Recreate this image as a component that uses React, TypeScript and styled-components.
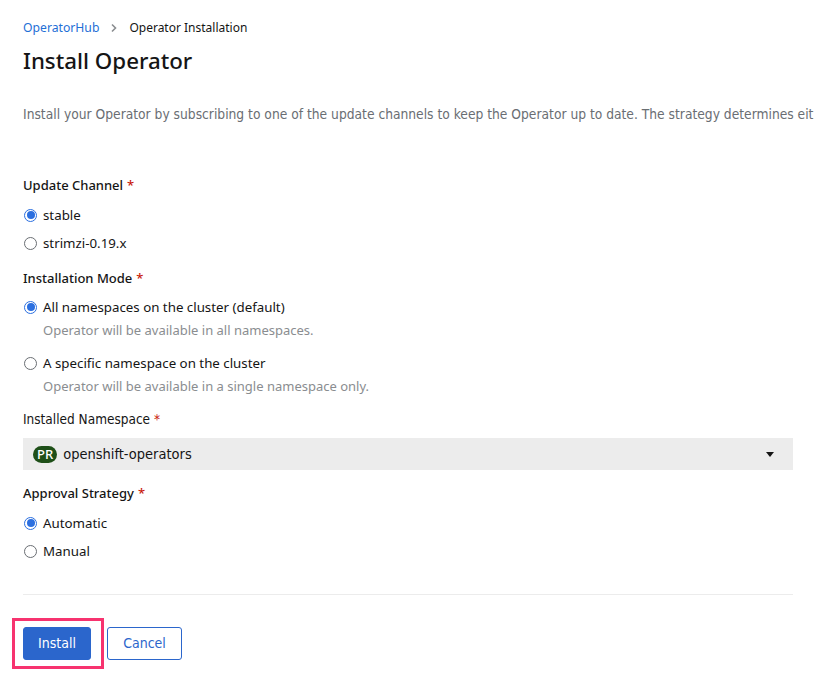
import React from "react";
import styled, { createGlobalStyle } from "styled-components";

const GlobalStyle = createGlobalStyle`
  html, body { margin: 0; padding: 0; background: #fff; }
  body { font-family: "Noto Sans", "Open Sans", sans-serif; color: #151515; overflow: hidden; }
`;

const wide = `"Noto Sans", "Open Sans", sans-serif`;
const narrow = `"Liberation Sans Narrow", "DejaVu Sans Condensed", "Noto Sans", sans-serif`;

const Page = styled.div`
  width: 814px;
  height: 684px;
  padding: 18px 0 0 23px;
  box-sizing: border-box;
  overflow: hidden;
`;

const Breadcrumb = styled.nav`
  display: flex;
  align-items: center;
  gap: 11px;
  font-family: ${wide};
  font-size: 12.2px;
  line-height: 20px;
  white-space: nowrap;
`;

const CrumbLink = styled.a`
  color: #1f6fd6;
  text-decoration: none;
`;

const CrumbSep = styled.span`
  display: inline-flex;
`;

const Current = styled.span`
  font-size: 12px;
`;

const Title = styled.h1`
  margin: 7px 0 0;
  font-family: ${wide};
  font-weight: 500;
  font-size: 22.3px;
  line-height: 32px;
  color: #151515;
  white-space: nowrap;
`;

const DescBox = styled.div`
  margin-top: 27px;
  overflow: hidden;
`;

const Description = styled.p`
  margin: 0;
  font-family: ${narrow};
  font-size: 13.7px;
  line-height: 20px;
  color: #6a6e73;
  white-space: nowrap;
`;

const Form = styled.div`
  width: 770px;
  margin-top: 51px;
`;

const Group = styled.div<{ $gap: number }>`
  margin-top: ${(p) => p.$gap}px;
  &:first-child { margin-top: 0; }
`;

const Label = styled.div<{ $narrow?: boolean }>`
  font-family: ${(p) => (p.$narrow ? narrow : wide)};
  font-size: ${(p) => (p.$narrow ? "13.5px" : "13px")};
  font-weight: 500;
  line-height: 20px;
  color: #151515;
  white-space: nowrap;
`;

const Req = styled.span`
  color: #c9190b;
  margin-left: 4px;
`;

const Options = styled.div<{ $gap: number; $top: number }>`
  display: flex;
  flex-direction: column;
  gap: ${(p) => p.$gap}px;
  margin-top: ${(p) => p.$top}px;
`;

const Option = styled.label`
  display: block;
`;

const OptionRow = styled.div`
  display: flex;
  align-items: center;
  gap: 6px;
  font-family: ${wide};
  font-size: 13.3px;
  line-height: 20px;
  color: #151515;
  white-space: nowrap;
`;

const Radio = styled.span<{ $checked?: boolean }>`
  width: 13px;
  height: 13px;
  margin-left: 1px;
  border-radius: 50%;
  box-sizing: border-box;
  border: 1px solid ${(p) => (p.$checked ? "#2b6fe0" : "#6a6e73")};
  display: inline-flex;
  align-items: center;
  justify-content: center;
  flex: none;
  &::after {
    content: "";
    width: 8px;
    height: 8px;
    border-radius: 50%;
    background: ${(p) => (p.$checked ? "#2b6fe0" : "transparent")};
  }
`;

const Help = styled.div`
  margin: 3px 0 0 20px;
  font-family: ${wide};
  font-size: 13px;
  line-height: 20px;
  color: #8a8d90;
  white-space: nowrap;
`;

const Select = styled.div`
  margin-top: 9px;
  height: 32px;
  background: #ececec;
  display: flex;
  align-items: center;
  padding: 0 19px 0 10px;
  box-sizing: border-box;
`;

const Badge = styled.span`
  background: #1e4f18;
  color: #fff;
  font-family: ${wide};
  font-size: 13px;
  font-weight: 500;
  line-height: 17px;
  height: 17px;
  padding: 0 4px;
  border-radius: 9px;
  margin-right: 6px;
`;

const SelectText = styled.span`
  flex: 1;
  font-family: ${narrow};
  font-size: 14.5px;
  color: #151515;
`;

const Caret = styled.span`
  width: 0;
  height: 0;
  border-left: 4.5px solid transparent;
  border-right: 4.5px solid transparent;
  border-top: 5px solid #151515;
`;

const Divider = styled.hr`
  margin: 33px 0 0;
  border: 0;
  border-top: 1px solid #ececec;
`;

const Actions = styled.div`
  display: flex;
  align-items: center;
  gap: 16px;
  margin: 23px 0 0 -11px;
`;

const Highlight = styled.div`
  border: 3px solid #f7336f;
  padding: 6px 10px 6px 8px;
  display: flex;
`;

const Button = styled.button<{ $primary?: boolean }>`
  height: 33px;
  padding: 0 0 2px;
  border-radius: 3px;
  font-family: ${narrow};
  font-size: 14px;
  cursor: pointer;
  background: ${(p) => (p.$primary ? "#2b66cc" : "#fff")};
  color: ${(p) => (p.$primary ? "#fff" : "#2b66cc")};
  border: 1px solid #2b66cc;
  width: ${(p) => (p.$primary ? "68px" : "75px")};
`;

const CancelWrap = styled.div`
  margin-left: -13px;
`;

type Opt = { label: string; help?: string; checked?: boolean };

const RadioGroup: React.FC<{ options: Opt[]; gap: number; top?: number }> = ({
  options,
  gap,
  top = 10,
}) => (
  <Options $gap={gap} $top={top}>
    {options.map((o) => (
      <Option key={o.label}>
        <OptionRow>
          <Radio $checked={o.checked} />
          {o.label}
        </OptionRow>
        {o.help && <Help>{o.help}</Help>}
      </Option>
    ))}
  </Options>
);

export default function App() {
  return (
    <>
      <GlobalStyle />
      <Page>
        <Breadcrumb>
          <CrumbLink href="#">OperatorHub</CrumbLink>
          <CrumbSep>
            <svg width="8" height="10" viewBox="0 0 8 10">
              <path d="M2 1.5 L5.5 5 L2 8.5" fill="none" stroke="#8a8d90" strokeWidth="1.6" />
            </svg>
          </CrumbSep>
          <Current>Operator Installation</Current>
        </Breadcrumb>
        <Title>Install Operator</Title>
        <DescBox>
          <Description>
            Install your Operator by subscribing to one of the update channels to keep the Operator up to date. The strategy determines eit
          </Description>
        </DescBox>
        <Form>
          <Group $gap={0}>
            <Label>
              Update Channel<Req>*</Req>
            </Label>
            <RadioGroup
              gap={8}
              options={[{ label: "stable", checked: true }, { label: "strimzi-0.19.x" }]}
            />
          </Group>
          <Group $gap={15}>
            <Label>
              Installation Mode<Req>*</Req>
            </Label>
            <RadioGroup
              gap={13}
              top={9}
              options={[
                {
                  label: "All namespaces on the cluster (default)",
                  help: "Operator will be available in all namespaces.",
                  checked: true,
                },
                {
                  label: "A specific namespace on the cluster",
                  help: "Operator will be available in a single namespace only.",
                },
              ]}
            />
          </Group>
          <Group $gap={13}>
            <Label $narrow>
              Installed Namespace<Req>*</Req>
            </Label>
            <Select>
              <Badge>PR</Badge>
              <SelectText>openshift-operators</SelectText>
              <Caret />
            </Select>
          </Group>
          <Group $gap={13}>
            <Label>
              Approval Strategy<Req>*</Req>
            </Label>
            <RadioGroup
              gap={8}
              options={[{ label: "Automatic", checked: true }, { label: "Manual" }]}
            />
          </Group>
          <Divider />
          <Actions>
            <Highlight>
              <Button $primary>Install</Button>
            </Highlight>
            <CancelWrap>
              <Button>Cancel</Button>
            </CancelWrap>
          </Actions>
        </Form>
      </Page>
    </>
  );
}
